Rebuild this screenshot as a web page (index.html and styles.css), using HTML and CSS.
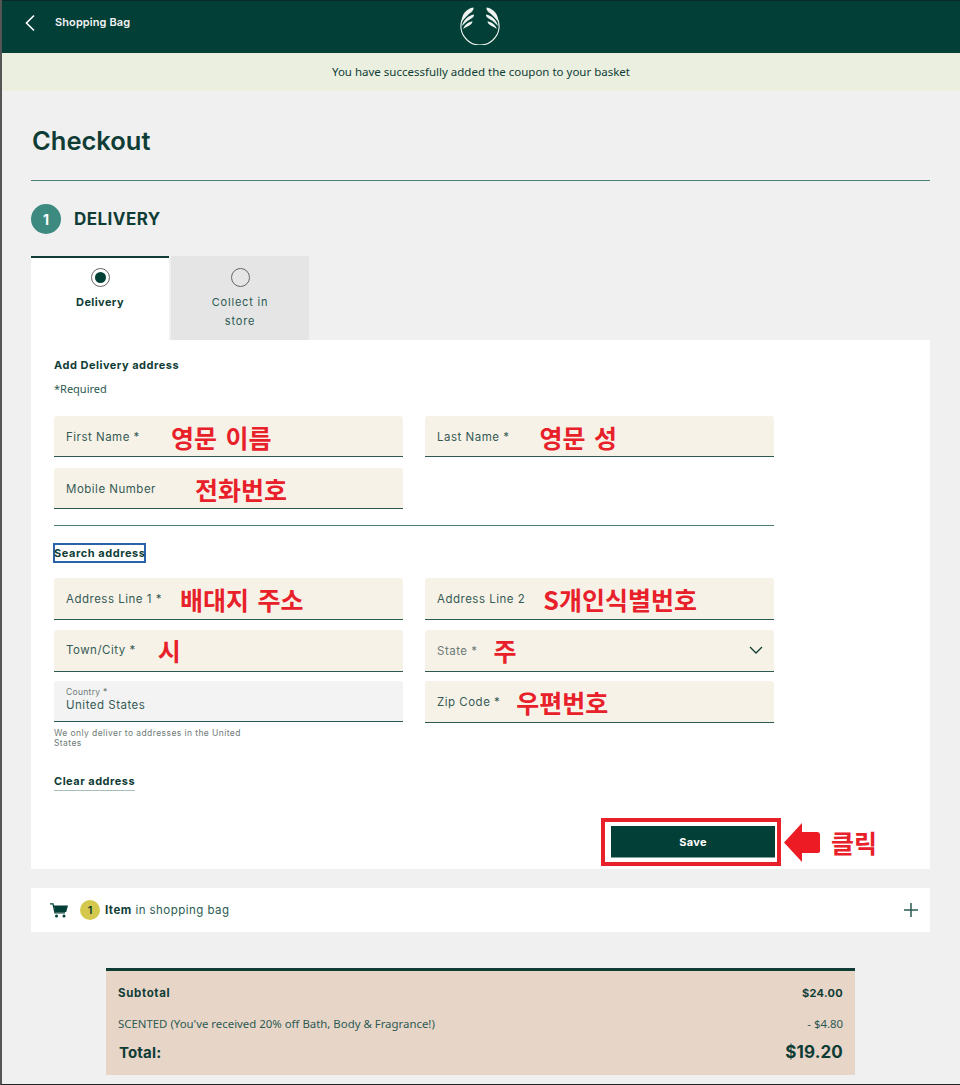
FILE: index.html
```html
<!DOCTYPE html>
<html lang="en">
<head>
<meta charset="utf-8">
<title>Checkout</title>
<link rel="stylesheet" href="styles.css">
</head>
<body>
<div class="page">
  <header class="topbar">
    <svg class="back" viewBox="0 0 12 18" width="12" height="18"><path d="M10 1.500 2.500 9l7.500 7.500" fill="none" stroke="#fff" stroke-width="1.600"/></svg>
    <span class="topbar-title">Shopping Bag</span>
    <svg class="logo" viewBox="0 0 40 40" width="40" height="40">
      <path d="M2 15A19 19 0 1 0 38 15" fill="none" stroke="#f4f7f5" stroke-width="1.100"/>
      <path d="M1.500 17C1.500 10 6 3.500 13.500 2.500c.5 3.500-3 5-5.500 7.500-2.500 2.300-4.500 4.500-6.500 7z" fill="#eef3ef"/>
      <path d="M2 21C3.500 15 8 10.500 14 9.500c.2 3-3 4-5.500 5.800C6 17 4 19 2 21z" fill="#eef3ef"/>
      <path d="M3 24c1.500-3.800 5-7 9.500-7.800 0 2.500-2 3.500-4 4.700-2.300 1.200-3.800 1.900-5.500 3.100z" fill="#eef3ef"/>
      <path d="M38.500 17C38.500 10 34 3.500 26.500 2.500c-.5 3.500 3 5 5.500 7.500 2.500 2.300 4.500 4.500 6.500 7z" fill="#eef3ef"/>
      <path d="M38 21C36.500 15 32 10.500 26 9.500c-.2 3 3 4 5.500 5.800C34 17 36 19 38 21z" fill="#eef3ef"/>
      <path d="M37 24c-1.500-3.800-5-7-9.500-7.800 0 2.500 2 3.500 4 4.700 2.300 1.200 3.800 1.900 5.500 3.100z" fill="#eef3ef"/>
    </svg>
  </header>
  <div class="notice">You have successfully added the coupon to your basket</div>
  <main class="main">
    <h1 class="title">Checkout</h1>
    <div class="section-head">
      <span class="step">1</span>
      <h2 class="section-title">DELIVERY</h2>
    </div>
    <div class="tabs">
      <div class="tab tab-active">
        <span class="radio radio-on"></span>
        <span class="tab-label">Delivery</span>
      </div>
      <div class="tab tab-off">
        <span class="radio"></span>
        <span class="tab-label">Collect in<br>store</span>
      </div>
    </div>
    <section class="panel">
      <h3 class="panel-title">Add Delivery address</h3>
      <p class="required">*Required</p>
      <div class="fields fields-name">
        <div class="field"><span class="label">First Name *</span><span class="note n-first">영문 이름</span></div>
        <div class="field"><span class="label">Last Name *</span><span class="note n-last">영문 성</span></div>
        <div class="field"><span class="label">Mobile Number</span><span class="note n-mobile">전화번호</span></div>
      </div>
      <div class="rule"></div>
      <div class="search-row"><span class="search">Search address</span></div>
      <div class="fields fields-address">
        <div class="field"><span class="label">Address Line 1 *</span><span class="note n-addr1">배대지 주소</span></div>
        <div class="field"><span class="label">Address Line 2</span><span class="note n-addr2">S개인식별번호</span></div>
        <div class="field"><span class="label">Town/City *</span><span class="note n-city">시</span></div>
        <div class="field"><span class="label label-muted">State *</span><span class="note n-state">주</span>
          <svg class="chevron" viewBox="0 0 14 8" width="14" height="8"><path d="M1 1l6 6 6-6" fill="none" stroke="#0f3d36" stroke-width="1.300"/></svg>
        </div>
        <div class="country-wrap">
          <div class="field field-country">
            <span class="mini-label">Country *</span>
            <span class="country">United States</span>
          </div>
          <p class="hint">We only deliver to addresses in the United States</p>
        </div>
        <div class="field"><span class="label">Zip Code *</span><span class="note n-zip">우편번호</span></div>
      </div>
      <div class="clear-row"><span class="clear">Clear address</span></div>
      <div class="save-row">
        <div class="save-box"><button class="save" type="button">Save</button></div>
        <svg class="arrow" viewBox="0 0 37 39" width="37" height="39"><path d="M0 19.500 18 0v9h15q3 0 3 3v16q0 2-3 2H18v9z" fill="#ed1c24"/></svg>
        <span class="note n-click">클릭</span>
      </div>
    </section>
    <section class="bag">
      <svg class="cart" viewBox="0 0 18 15" width="18" height="15"><path d="M0 .8h3l2 9h10" fill="none" stroke="#023f36" stroke-width="1.300"/><path d="M3.800 2.500H18l-1.800 6.500H5.200z" fill="#023f36"/><circle cx="6.500" cy="13" r="1.500" fill="#023f36"/><circle cx="14" cy="13" r="1.500" fill="#023f36"/></svg>
      <span class="badge">1</span>
      <span class="bag-text"><b>Item</b> in shopping bag</span>
      <svg class="plus" viewBox="0 0 14 14" width="14" height="14"><path d="M7 0v14M0 7h14" stroke="#2c5a52" stroke-width="1.500"/></svg>
    </section>
    <section class="summary">
      <div class="sum-row sum-sub"><span>Subtotal</span><span class="sub-val">$24.00</span></div>
      <div class="sum-row sum-coupon"><span>SCENTED (You've received 20% off Bath, Body &amp; Fragrance!)</span><span>- $4.80</span></div>
      <div class="sum-row sum-total"><span>Total:</span><span class="total-val">$19.20</span></div>
    </section>
  </main>
</div>
</body>
</html>
```

FILE: styles.css
```css
* { box-sizing: border-box; }
html, body { margin: 0; padding: 0; }
body { background: #f0f0f0; font-family: "Inter", "Noto Sans CJK KR", sans-serif; color: #0f3d36; }
.page { width: 960px; height: 1085px; overflow: hidden; border-left: 2px solid #555; border-bottom: 1px solid #222; background: #f0f0f0; }
.topbar { height: 53px; margin-left: -2px; background: #023f36; border-top: 1px solid #0a2a25; display: flex; align-items: center; position: relative; padding: 0 0 10px 24px; }
.back { margin-right: 19px; margin-top: 1px; }
.topbar-title { color: #f2f2f2; font-size: 11px; font-weight: 600; letter-spacing: .1px; }
.logo { position: absolute; left: 460px; top: 4px; }
.notice { height: 38px; padding-bottom: 2px; background: #ebefe0; display: flex; align-items: center; justify-content: center; font: 11.500px "Noto Sans", sans-serif; color: #0f3d36; }
.main { padding: 0 30px 0 29px; }
.title { margin: 0; height: 90px; padding: 33px 0 0 1px; border-bottom: 1px solid #4e7d75; font-size: 25.500px; line-height: 34px; font-weight: 600; color: #0f3d36; }
.section-head { display: flex; align-items: center; gap: 13px; height: 30px; margin-top: 23px; }
.step { width: 30px; height: 30px; border-radius: 50%; background: #3d8a80; color: #fff; display: flex; align-items: center; justify-content: center; font-size: 14px; font-weight: 700; }
.section-title { margin: 0; font-size: 17px; font-weight: 700; letter-spacing: .45px; }
.tabs { display: flex; gap: 2px; margin-top: 22px; height: 84px; }
.tab { width: 138px; display: flex; flex-direction: column; align-items: center; font-size: 11px; letter-spacing: .8px; }
.tab-active { background: #fff; border-top: 2px solid #0f3d36; padding-top: 10px; font-weight: 700; letter-spacing: .4px; }
.tab-off { background: #e5e5e5; padding-top: 12px; color: #2c5a52; }
.radio { width: 19px; height: 19px; border-radius: 50%; border: 1px solid #666; background: transparent; display: block; position: relative; flex: none; }
.radio-on::after { content: ""; position: absolute; inset: 3px; border-radius: 50%; background: #023f36; }
.tab-label { margin-top: 6px; line-height: 19px; text-align: center; }
.panel { background: #fff; height: 529px; padding: 18px 0 0 23px; }
.panel-title { margin: 0; font-size: 11px; line-height: 14px; font-weight: 700; letter-spacing: .5px; }
.required { margin: 10px 0 0; font: 11px/14px "Noto Sans", sans-serif; color: #2c5a52; }
.fields { display: grid; grid-template-columns: 349px 349px; column-gap: 22px; row-gap: 11px; }
.fields-name { margin-top: 20px; }
.fields-name .field { padding-top: 2px; }
.field { height: 41px; background: #f7f2e8; border-radius: 3px 3px 0 0; border-bottom: 1px solid #2c5a52; display: flex; align-items: center; padding: 0 12px; position: relative; }
.label { font-size: 11.500px; letter-spacing: .5px; color: #355b55; white-space: nowrap; }
.label-muted { color: #6d7a76; margin-top: 2px; }
.note { font-family: "Noto Sans CJK KR", sans-serif; font-weight: 700; font-size: 25px; line-height: 30px; word-spacing: 3px; color: #e8202a; white-space: nowrap; }
.n-first { margin-left: 31px; }
.n-last { margin-left: 30px; }
.n-mobile { margin-left: 39px; }
.n-addr1 { margin-left: 18px; }
.n-addr2 { margin-left: 18px; }
.n-city { margin-left: 22px; }
.n-state { margin-left: 16px; }
.n-zip { margin-left: 16px; }
.chevron { margin-left: auto; margin-right: -1px; }
.rule { height: 1px; width: 720px; background: #4e7d75; margin-top: 16px; }
.search-row { margin-top: 17px; margin-left: -1px; height: 19px; }
.search { display: block; height: 20px; line-height: 16px; font-size: 11px; font-weight: 700; border: 2px solid #2a64a8; padding: 0; width: 93px; white-space: nowrap; letter-spacing: .55px; text-indent: -1px; }
.fields-address { margin-top: 16px; row-gap: 9.500px; }
.fields-address .field { height: 42px; }
.country-wrap { display: flex; flex-direction: column; }
.fields-address .field-country { background: #f3f3f3; flex-direction: column; align-items: flex-start; justify-content: center; height: 41px; padding-bottom: 3px; }
.mini-label { font-size: 8.500px; line-height: 11px; color: #6d7a76; letter-spacing: .3px; }
.country { font-size: 11.500px; line-height: 14px; color: #355b55; letter-spacing: .5px; }
.hint { margin: 6px 0 0; width: 200px; font-size: 8.500px; line-height: 10px; color: #6d7a76; letter-spacing: .42px; }
.clear-row { margin-top: 21px; }
.clear { display: inline-block; font-size: 11px; font-weight: 700; line-height: 14px; padding-bottom: 2px; border-bottom: 1px solid #a9bdb9; letter-spacing: .5px; }
.save-row { display: flex; align-items: center; margin: 27px 0 0 547px; height: 48px; }
.save-box { width: 180px; height: 48px; border: 4px solid #e8202a; padding: 4px 2px 4px 6px; }
.save { display: block; width: 100%; height: 32px; border: 0; border-bottom: 1px solid #7fa39c; background: #023f36; color: #fff; font: 700 11px "Inter", sans-serif; letter-spacing: .3px; padding: 0; }
.arrow { margin-left: 3px; }
.n-click { margin-left: 10px; }
.bag { margin-top: 19px; height: 44px; background: #fff; display: flex; align-items: center; padding: 0 12px 0 19px; }
.cart { flex: none; }
.badge { width: 20px; height: 20px; margin-left: 12px; border-radius: 50%; background: #d4c94e; display: flex; align-items: center; justify-content: center; font-size: 11px; font-weight: 600; }
.bag-text { margin-left: 5px; font-size: 11.500px; letter-spacing: .46px; color: #2c5a52; }
.bag-text b { color: #0f3d36; font-weight: 700; }
.plus { margin-left: auto; }
.summary { margin: 36px 75px 0; height: 107px; background: #e7d5c8; border-top: 3px solid #0f3d36; padding: 0 12px; }
.sum-row { display: flex; justify-content: space-between; align-items: center; }
.sum-sub { margin-top: 15px; height: 14px; font-size: 11.500px; font-weight: 700; letter-spacing: .65px; }
.sub-val { font-size: 11px; letter-spacing: .3px; }
.sum-coupon { margin-top: 16px; height: 14px; font: 11.400px "Noto Sans", sans-serif; color: #2c5a52; }
.sum-total { margin-top: 10px; height: 24px; font-size: 15px; font-weight: 700; letter-spacing: .15px; padding-left: 1px; }
.total-val { font-size: 17px; }
```
